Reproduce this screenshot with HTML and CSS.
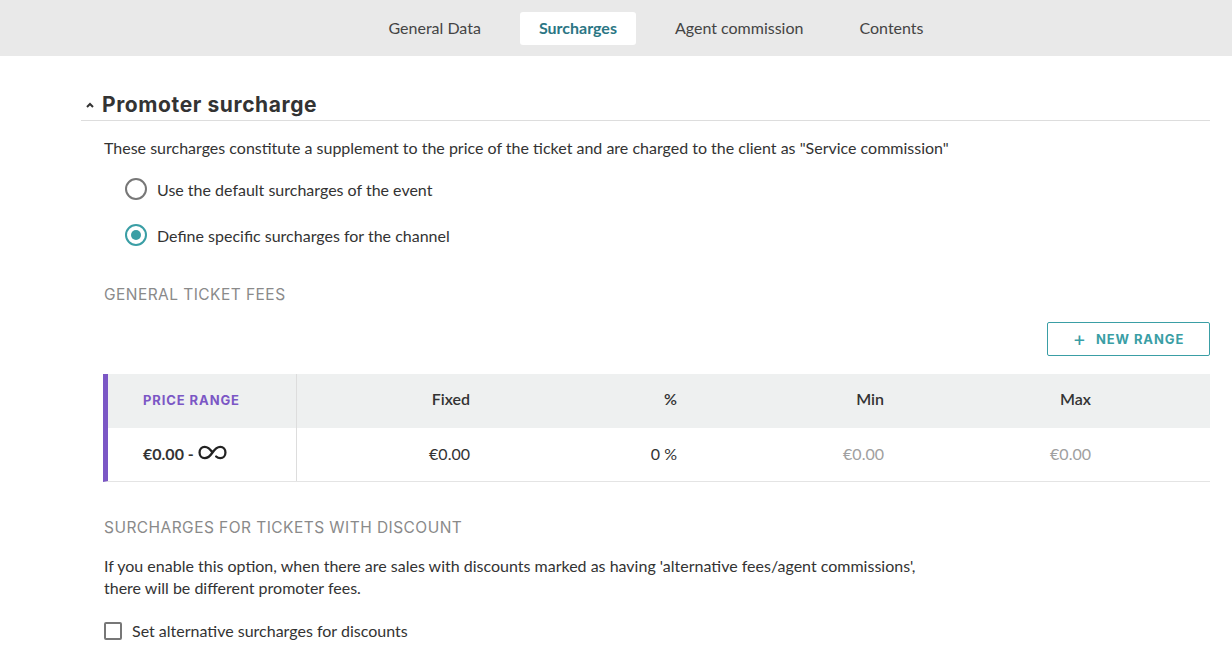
FILE: index.html
```html
<!DOCTYPE html>
<html>
<head>
    <title>Channel surcharges</title>
    <link rel="stylesheet" href="styles.css">
</head>
<body>
    <div class="tabbar">
        <a class="tab">General Data</a>
        <a class="tab active">Surcharges</a>
        <a class="tab">Agent commission</a>
        <a class="tab">Contents</a>
    </div>

    <div class="content">
        <div class="section-title">
            <svg class="caret" width="10" height="8" viewBox="0 0 10 8"><path d="M2 6 L5 3 L8 6" fill="none" stroke="#333" stroke-width="2"/></svg>
            <h2>Promoter surcharge</h2>
        </div>

        <div class="section-body">
            <p class="intro">These surcharges constitute a supplement to the price of the ticket and are charged to the client as "Service commission"</p>

            <div class="radios">
                <label class="radio-row"><span class="radio"></span>Use the default surcharges of the event</label>
                <label class="radio-row"><span class="radio checked"></span>Define specific surcharges for the channel</label>
            </div>

            <div class="subtitle">GENERAL TICKET FEES</div>

            <div class="actions">
                <button class="btn-outline"><span class="plus">+</span>NEW RANGE</button>
            </div>

            <div class="fees-table">
                <div class="cell head first">PRICE RANGE</div>
                <div class="cell head">Fixed</div>
                <div class="cell head">%</div>
                <div class="cell head">Min</div>
                <div class="cell head">Max</div>
                <div class="cell head"></div>

                <div class="cell first range">€0.00 - <svg class="inf" width="29" height="15" viewBox="0 0 28 14"><path d="M14 7 C11 2.5 8.5 1.5 6.5 1.5 C3.5 1.5 1.5 4 1.5 7 C1.5 10 3.5 12.5 6.5 12.5 C8.5 12.5 11 11.5 14 7 C17 2.5 19.5 1.5 21.5 1.5 C24.5 1.5 26.5 4 26.5 7 C26.5 10 24.5 12.5 21.5 12.5 C20 12.5 18.5 11.8 17.5 10.8" fill="none" stroke="#222" stroke-width="2.2" stroke-linecap="round"/></svg></div>
                <div class="cell">€0.00</div>
                <div class="cell">0 %</div>
                <div class="cell muted">€0.00</div>
                <div class="cell muted">€0.00</div>
                <div class="cell"></div>
            </div>

            <div class="subtitle discount">SURCHARGES FOR TICKETS WITH DISCOUNT</div>
            <p class="note">If you enable this option, when there are sales with discounts marked as having 'alternative fees/agent commissions',<br>there will be different promoter fees.</p>

            <label class="check-row"><span class="checkbox"></span>Set alternative surcharges for discounts</label>
        </div>
    </div>
</body>
</html>
```

FILE: styles.css
```css
body {
    margin: 0;
    padding: 0;
    font-family: Lato, "Open Sans", sans-serif;
    font-size: 16px;
    color: #333;
    background-color: #fff;
}

.tabbar {
    height: 56px;
    background-color: #e9e9e9;
    display: flex;
    justify-content: center;
    align-items: center;
    padding-left: 80px;
}
.tab {
    font-size: 16px;
    line-height: 17px;
    color: #444;
    padding: 7px 17px 9px;
    margin: 0 11px;
    border-radius: 3px;
    cursor: pointer;
}
.tab.active {
    background-color: #fff;
    color: #2b7684;
    font-weight: bold;
    padding: 7px 19px 9px;
}

.content {
    padding: 36px 22px 0 81px;
}

.section-title {
    display: flex;
    align-items: center;
    gap: 7px;
    padding-left: 4px;
    padding-bottom: 3px;
    border-bottom: 1px solid #ddd;
}
.section-title h2 {
    margin: 0;
    font-family: Inter, sans-serif;
    font-size: 21px;
    font-weight: 700;
    color: #333;
    letter-spacing: 0.6px;
}

.section-body {
    padding-left: 22px;
}
.intro {
    line-height: 20px;
    margin: 17px 0 0 1px;
}

.radios {
    padding-left: 22px;
    margin-top: 19px;
}
.radio-row {
    display: flex;
    align-items: center;
    gap: 10px;
    height: 24px;
    margin-bottom: 22px;
}
.radio {
    width: 18px;
    height: 18px;
    border: 2px solid #777;
    border-radius: 50%;
    display: inline-block;
    position: relative;
}
.radio.checked {
    border-color: #3a9ea5;
}
.radio.checked::after {
    content: "";
    position: absolute;
    left: 4px;
    top: 4px;
    width: 10px;
    height: 10px;
    border-radius: 50%;
    background-color: #3a9ea5;
}

.subtitle {
    font-family: Inter, sans-serif;
    font-size: 15.5px;
    line-height: 19px;
    letter-spacing: 0.45px;
    color: #8a8a8a;
    margin-top: 38px;
    padding-left: 1px;
}

.actions {
    display: flex;
    justify-content: flex-end;
    margin-top: 18px;
}
.btn-outline {
    width: 163px;
    height: 34px;
    border: 1px solid #3a9ea5;
    border-radius: 2px;
    background: #fff;
    color: #3a9ea5;
    font-family: Inter, sans-serif;
    font-size: 13px;
    font-weight: 700;
    letter-spacing: 0.9px;
    cursor: pointer;
}
.plus {
    font-weight: 400;
    font-size: 20px;
    margin-right: 9px;
    vertical-align: -2px;
}

.fees-table {
    margin-top: 18px;
    display: grid;
    grid-template-columns: 189px repeat(4, 207px) 1fr;
    border-left: 5px solid #7b57c5;
    border-bottom: 1px solid #e4e4e4;
}
.cell {
    height: 53px;
    display: flex;
    align-items: center;
    justify-content: flex-end;
    padding-right: 34px;
    padding-bottom: 3px;
    box-sizing: border-box;
    color: #333;
}
.cell.head {
    height: 54px;
    padding-bottom: 5px;
    background-color: #eef0f0;
    font-weight: 600;
}
.cell.first {
    justify-content: flex-start;
    padding-left: 35px;
    padding-right: 0;
    border-right: 1px solid #ddd;
}
.cell.head.first {
    font-family: Inter, sans-serif;
    font-size: 13px;
    font-weight: 700;
    color: #7b57c5;
    letter-spacing: 0.9px;
    padding-bottom: 2px;
}
.cell.range {
    font-weight: 700;
    gap: 4px;
}
.inf {
    margin-top: -2px;
}
.cell.muted {
    color: #a0a0a0;
}

.subtitle.discount {
    margin-top: 36px;
}
.note {
    line-height: 22px;
    margin: 18px 0 0 1px;
}

.check-row {
    display: flex;
    align-items: center;
    gap: 10px;
    margin-top: 22px;
    padding-left: 1px;
}
.checkbox {
    width: 14px;
    height: 14px;
    border: 2px solid #777;
    border-radius: 2px;
    display: inline-block;
}
```
